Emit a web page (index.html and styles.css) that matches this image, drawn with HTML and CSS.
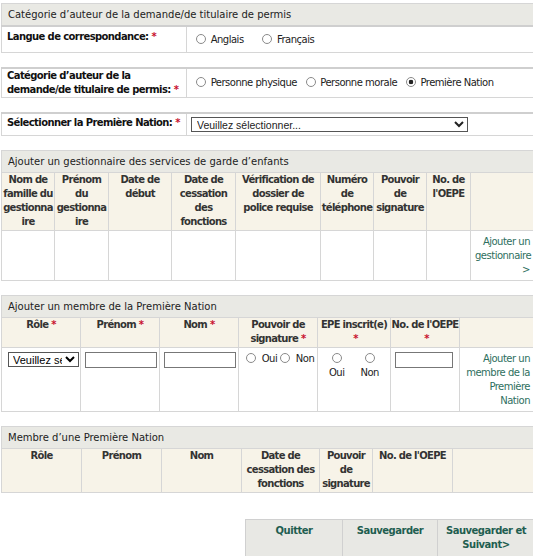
FILE: index.html
```html
<!DOCTYPE html>
<html lang="fr">
<head>
    <meta charset="UTF-8">
    <meta name="viewport" content="width=device-width, initial-scale=1.0">
    <title>Catégorie d'auteur de la demande</title>
    <link rel="stylesheet" href="styles.css">
</head>
<body>
    <div class="page">
        <!-- Catégorie d'auteur -->
        <table class="box first">
            <colgroup><col class="label-col"><col></colgroup>
            <tr><th colspan="2" class="box-title">Catégorie d’auteur de la demande/de titulaire de permis</th></tr>
            <tr class="row-lang">
                <td class="label">Langue de correspondance:<span class="req">*</span></td>
                <td class="field">
                    <label class="opt wide"><input type="radio" name="langue"> Anglais</label>
                    <label class="opt wide"><input type="radio" name="langue"> Français</label>
                </td>
            </tr>
        </table>

        <table class="box">
            <colgroup><col class="label-col"><col></colgroup>
            <tr>
                <td class="label">Catégorie d’auteur de la demande/de titulaire de permis:<span class="req">*</span></td>
                <td class="field">
                    <label class="opt"><input type="radio" name="cat"> Personne physique</label>
                    <label class="opt"><input type="radio" name="cat"> Personne morale</label>
                    <label class="opt"><input type="radio" name="cat" checked> Première Nation</label>
                </td>
            </tr>
        </table>

        <table class="box">
            <colgroup><col class="label-col"><col></colgroup>
            <tr class="row-nation">
                <td class="label">Sélectionner la Première Nation:<span class="req">*</span></td>
                <td class="field">
                    <select class="nation">
                        <option>Veuillez sélectionner...</option>
                    </select>
                </td>
            </tr>
        </table>

        <!-- Gestionnaires -->
        <table class="grid">
            <colgroup>
                <col style="width:53px"><col style="width:54px"><col style="width:63px"><col style="width:64px">
                <col style="width:85px"><col style="width:53px"><col style="width:53px"><col style="width:44px"><col>
            </colgroup>
            <tr><th colspan="9" class="box-title">Ajouter un gestionnaire des services de garde d’enfants</th></tr>
            <tr class="heads">
                <th>Nom de famille du gestionna<wbr>ire</th>
                <th>Prénom du gestionna<wbr>ire</th>
                <th>Date de début</th>
                <th>Date de cessation des fonctions</th>
                <th class="padded">Vérification de dossier de police requise</th>
                <th>Numéro de téléphone</th>
                <th>Pouvoir de signature</th>
                <th>No. de l'OEPE</th>
                <th></th>
            </tr>
            <tr>
                <td></td><td></td><td></td><td></td><td></td><td></td><td></td><td></td>
                <td class="action"><a href="#">Ajouter un gestionnaire &gt;</a></td>
            </tr>
        </table>

        <!-- Membre à ajouter -->
        <table class="grid">
            <colgroup>
                <col style="width:79px"><col style="width:79px"><col style="width:79px"><col style="width:79px">
                <col style="width:73px"><col style="width:69px"><col>
            </colgroup>
            <tr><th colspan="7" class="box-title">Ajouter un membre de la Première Nation</th></tr>
            <tr class="heads">
                <th>Rôle<span class="req">*</span></th>
                <th>Prénom<span class="req">*</span></th>
                <th>Nom<span class="req">*</span></th>
                <th>Pouvoir de signature<span class="req">*</span></th>
                <th>EPE inscrit(e)<br><span class="req">*</span></th>
                <th>No. de l'OEPE<br><span class="req">*</span></th>
                <th></th>
            </tr>
            <tr>
                <td><select class="role"><option>Veuillez sélectionner...</option></select></td>
                <td><input type="text" class="txt"></td>
                <td><input type="text" class="txt"></td>
                <td class="radios">
                    <label><input type="radio" name="pouvoir"> Oui</label><label><input type="radio" name="pouvoir"> Non</label>
                </td>
                <td class="radios stacked">
                    <label><input type="radio" name="epe"><br>Oui</label><label><input type="radio" name="epe"><br>Non</label>
                </td>
                <td><input type="text" class="txt short"></td>
                <td class="action"><a href="#">Ajouter un membre de la Première Nation</a></td>
            </tr>
        </table>

        <!-- Liste des membres -->
        <table class="grid">
            <colgroup>
                <col style="width:80px"><col style="width:80px"><col style="width:80px"><col style="width:78px">
                <col style="width:53px"><col style="width:80px"><col>
            </colgroup>
            <tr><th colspan="7" class="box-title">Membre d’une Première Nation</th></tr>
            <tr class="heads">
                <th>Rôle</th>
                <th>Prénom</th>
                <th>Nom</th>
                <th>Date de cessation des fonctions</th>
                <th>Pouvoir de signature</th>
                <th>No. de l'OEPE</th>
                <th></th>
            </tr>
        </table>

        <div class="buttons">
            <table class="btn-bar">
                <colgroup><col style="width:97px"><col style="width:95px"><col></colgroup>
                <tr>
                    <td><a href="#">Quitter</a></td>
                    <td><a href="#">Sauvegarder</a></td>
                    <td class="last"><a href="#">Sauvegarder et Suivant&gt;</a></td>
                </tr>
            </table>
        </div>
    </div>
</body>
</html>
```

FILE: styles.css
```css
html, body {
    overflow: hidden;
}
body {
    margin: 0;
    font-family: "DejaVu Sans", Verdana, sans-serif;
    font-size: 10px;
    line-height: 14px;
    letter-spacing: -0.5px;
    color: #222;
    background-color: #fff;
}
.page {
    padding: 3px 0 0 1px;
    width: 533px;
}
table {
    border-collapse: collapse;
    table-layout: fixed;
    width: 533px;
}
.box,
.grid {
    margin-bottom: 14px;
    border: 1px solid #d6d6d6;
}
.box {
    border-top: 2px solid #cfcfcf;
}
.box.first {
    border-top: 1px solid #d6d6d6;
}
.label-col {
    width: 185px;
}
.box-title {
    background-color: #e9e9e4;
    border-bottom: 2px solid #cfcfcf;
    font-weight: normal;
    letter-spacing: 0;
    text-align: left;
    padding: 4px 6px 3px;
    color: #222;
}
.box td {
    padding: 0 5px;
}
.box .label {
    font-weight: bold;
    letter-spacing: -0.6px;
    vertical-align: top;
    border-right: 1px solid #d6d6d6;
    color: #111;
}
.box .field {
    vertical-align: middle;
    padding-left: 4px;
}
.row-lang td {
    height: 22px;
}
.row-lang .label {
    padding-top: 3px;
}
.row-nation td {
    height: 19px;
}
.row-nation .label {
    padding-top: 2px;
}
.req {
    color: #c8102e;
    margin-left: 3px;
    font-weight: bold;
}
.opt {
    margin-right: 1px;
    white-space: nowrap;
}
.opt.wide {
    margin-right: 11px;
}
input[type="radio"] {
    appearance: none;
    -webkit-appearance: none;
    box-sizing: border-box;
    width: 10px;
    height: 10px;
    margin: 0 2px 0 5px;
    border: 1px solid #8a8a8a;
    border-radius: 50%;
    background-color: #fff;
    vertical-align: -1px;
}
input[type="radio"]:checked {
    background: radial-gradient(circle, #222 0, #222 2px, #fff 2.6px);
}
.nation {
    width: 277px;
    height: 15px;
    font-family: "Liberation Sans", Arial, sans-serif;
    font-size: 10.5px;
    letter-spacing: 0;
    padding: 0 1px;
    border: 1px solid #555;
    border-radius: 0;
    background-color: #fff;
    color: #222;
    vertical-align: middle;
}
.grid th,
.grid td {
    border: 1px solid #d6d6d6;
}
.grid .heads th {
    background-color: #f7f3e8;
    font-weight: bold;
    letter-spacing: -0.7px;
    text-align: center;
    vertical-align: top;
    padding: 0 0 1px;
    color: #333;
}
.grid .heads th.padded {
    padding: 0 4px 1px;
}
.grid td {
    vertical-align: top;
    padding: 4px 5px;
}
.grid .action {
    text-align: right;
    padding: 4px 3px 3px 4px;
}
.action a {
    color: #2e6f5e;
    text-decoration: none;
}
.role {
    width: 71px;
    height: 15px;
    font-family: "Liberation Sans", Arial, sans-serif;
    font-size: 11px;
    letter-spacing: 0;
    padding: 0;
    margin-left: 1px;
    border: 1px solid #555;
    border-radius: 0;
    background-color: #fff;
}
.txt {
    width: 72px;
    height: 16px;
    box-sizing: border-box;
    border: 1px solid #777;
    padding: 0 2px;
    margin: 0 0 0 -1px;
}
.txt.short {
    width: 58px;
}
.radios {
    white-space: nowrap;
}
.grid .radios {
    padding-left: 4px;
}
.radios input[type="radio"] {
    margin: 0 3px;
}
.grid .radios.stacked {
    padding-left: 11px;
}
.radios.stacked label {
    display: inline-block;
    text-align: center;
    margin-right: 16px;
}
.radios.stacked input[type="radio"] {
    margin: 0;
}
.buttons {
    padding: 12px 0 0 244px;
}
.btn-bar {
    width: 300px;
}
.btn-bar td {
    height: 38px;
    background-color: #e8e8e4;
    border: 1px solid #d0d0d0;
    text-align: center;
    vertical-align: top;
    padding: 4px 4px 0;
    font-weight: bold;
    letter-spacing: -0.5px;
}
.btn-bar .last {
    padding-right: 14px;
}
.btn-bar a {
    color: #1f5e50;
    text-decoration: none;
}
```
